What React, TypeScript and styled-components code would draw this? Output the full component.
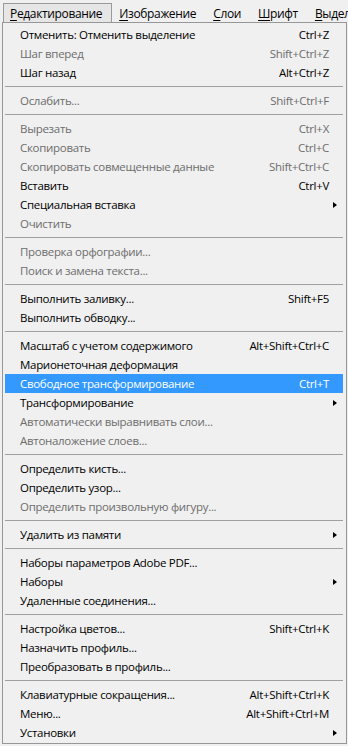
import React from "react";
import styled, { createGlobalStyle } from "styled-components";

const Global = createGlobalStyle`
  html, body { margin: 0; padding: 0; background: #f0f0f0; }
  body { font-family: "Open Sans", "Noto Sans", "Liberation Sans", sans-serif; font-size: 11px; }
  #root { width: 348px; height: 746px; overflow: hidden; }
`;

const MenuBar = styled.div`
  height: 22px;
  display: flex;
  align-items: flex-end;
  padding-left: 3px;
  background: #f0f0f0;
  color: #000;
  white-space: nowrap;
  overflow: hidden;
`;

const BarItem = styled.div<{ $open?: boolean }>`
  height: 19px;
  display: flex;
  align-items: center;
  padding: 1px 9px 0 6px;
  box-sizing: border-box;
  background: ${(p) => (p.$open ? "#e6e6e6" : "transparent")};
  border: 1px solid ${(p) => (p.$open ? "#9a9a9a" : "transparent")};
  border-bottom: none;
  line-height: 1;
  font-size: 12px;
  letter-spacing: -0.35px;
`;

const U = styled.span`
  text-decoration: underline;
  text-underline-offset: 2px;
`;

const Panel = styled.div`
  margin-left: 2px;
  width: 345px;
  box-sizing: border-box;
  border: 1px solid #979797;
  background: #f0f0f0;
  padding: 2px 3px 1px 2px;
  display: flex;
  flex-direction: column;
`;

const Row = styled.div<{ $disabled?: boolean; $active?: boolean }>`
  height: 19px;
  display: flex;
  align-items: center;
  padding-left: 15px;
  background: ${(p) => (p.$active ? "#3399ff" : "transparent")};
  color: ${(p) => (p.$active ? "#ffffff" : p.$disabled ? "#6d6d6d" : "#000000")};
  white-space: nowrap;
  font-size: 11.5px;
  letter-spacing: -0.3px;
`;

const Label = styled.span`
  flex: 1;
`;

const Shortcut = styled.span`
  text-align: right;
`;

const ArrowCell = styled.span`
  width: 14px;
  display: flex;
  align-items: center;
  justify-content: flex-start;
  padding-left: 4px;
  box-sizing: border-box;
`;

const Triangle = styled.span`
  width: 0;
  height: 0;
  border-top: 3.5px solid transparent;
  border-bottom: 3.5px solid transparent;
  border-left: 4px solid #000;
`;

const Separator = styled.div`
  height: 9px;
  display: flex;
  align-items: center;
  &::after {
    content: "";
    display: block;
    width: 100%;
    height: 1px;
    background: #a0a0a0;
  }
`;

type Item =
  | { sep: true }
  | { label: string; shortcut?: string; disabled?: boolean; sub?: boolean; active?: boolean; sep?: false };

const items: Item[] = [
  { label: "Отменить: Отменить выделение", shortcut: "Ctrl+Z" },
  { label: "Шаг вперед", shortcut: "Shift+Ctrl+Z", disabled: true },
  { label: "Шаг назад", shortcut: "Alt+Ctrl+Z" },
  { sep: true },
  { label: "Ослабить...", shortcut: "Shift+Ctrl+F", disabled: true },
  { sep: true },
  { label: "Вырезать", shortcut: "Ctrl+X", disabled: true },
  { label: "Скопировать", shortcut: "Ctrl+C", disabled: true },
  { label: "Скопировать совмещенные данные", shortcut: "Shift+Ctrl+C", disabled: true },
  { label: "Вставить", shortcut: "Ctrl+V" },
  { label: "Специальная вставка", sub: true },
  { label: "Очистить", disabled: true },
  { sep: true },
  { label: "Проверка орфографии...", disabled: true },
  { label: "Поиск и замена текста...", disabled: true },
  { sep: true },
  { label: "Выполнить заливку...", shortcut: "Shift+F5" },
  { label: "Выполнить обводку..." },
  { sep: true },
  { label: "Масштаб с учетом содержимого", shortcut: "Alt+Shift+Ctrl+C" },
  { label: "Марионеточная деформация" },
  { label: "Свободное трансформирование", shortcut: "Ctrl+T", active: true },
  { label: "Трансформирование", sub: true },
  { label: "Автоматически выравнивать слои...", disabled: true },
  { label: "Автоналожение слоев...", disabled: true },
  { sep: true },
  { label: "Определить кисть..." },
  { label: "Определить узор..." },
  { label: "Определить произвольную фигуру...", disabled: true },
  { sep: true },
  { label: "Удалить из памяти", sub: true },
  { sep: true },
  { label: "Наборы параметров Adobe PDF..." },
  { label: "Наборы", sub: true },
  { label: "Удаленные соединения..." },
  { sep: true },
  { label: "Настройка цветов...", shortcut: "Shift+Ctrl+K" },
  { label: "Назначить профиль..." },
  { label: "Преобразовать в профиль..." },
  { sep: true },
  { label: "Клавиатурные сокращения...", shortcut: "Alt+Shift+Ctrl+K" },
  { label: "Меню...", shortcut: "Alt+Shift+Ctrl+M" },
  { label: "Установки", sub: true },
];

export default function App() {
  return (
    <>
      <Global />
      <MenuBar>
        <BarItem $open>
          <U>Р</U>едактирование
        </BarItem>
        <BarItem>
          <U>И</U>зображение
        </BarItem>
        <BarItem>
          <U>С</U>лои
        </BarItem>
        <BarItem>
          <U>Ш</U>рифт
        </BarItem>
        <BarItem>
          <U>В</U>ыдел
        </BarItem>
      </MenuBar>
      <Panel>
        {items.map((it, i) =>
          it.sep ? (
            <Separator key={i} />
          ) : (
            <Row key={i} $disabled={it.disabled} $active={it.active}>
              <Label>{it.label}</Label>
              {it.shortcut && <Shortcut>{it.shortcut}</Shortcut>}
              <ArrowCell>{it.sub && <Triangle />}</ArrowCell>
            </Row>
          )
        )}
      </Panel>
    </>
  );
}
